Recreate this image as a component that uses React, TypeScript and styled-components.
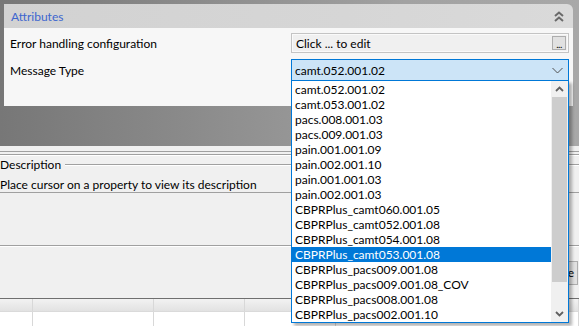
import React, { FC } from "react";
import styled, { createGlobalStyle } from "styled-components";

const options = [
  "camt.052.001.02",
  "camt.053.001.02",
  "pacs.008.001.03",
  "pacs.009.001.03",
  "pain.001.001.09",
  "pain.002.001.10",
  "pain.001.001.03",
  "pain.002.001.03",
  "CBPRPlus_camt060.001.05",
  "CBPRPlus_camt052.001.08",
  "CBPRPlus_camt054.001.08",
  "CBPRPlus_camt053.001.08",
  "CBPRPlus_pacs009.001.08",
  "CBPRPlus_pacs009.001.08_COV",
  "CBPRPlus_pacs008.001.08",
  "CBPRPlus_pacs002.001.10",
];
const selected = "CBPRPlus_camt053.001.08";
const columns = [32, 120, 90, 90];

const DoubleUp = () => (
  <svg width="10" height="11" viewBox="0 0 10 11">
    <path d="M1 5 L5 1.5 L9 5 M1 10 L5 6.5 L9 10" fill="none" stroke="#6a6a6a" strokeWidth="2" />
  </svg>
);

const ChevronDown = () => (
  <svg width="11" height="7" viewBox="0 0 11 7">
    <path d="M0.5 1 L5.5 6 L10.5 1" fill="none" stroke="#505050" strokeWidth="1" />
  </svg>
);

const ScrollArrow: FC<{ down?: boolean }> = ({ down }) => (
  <svg width="9" height="6" viewBox="0 0 9 6">
    <path
      d={down ? "M1 1 L4.5 4.5 L8 1" : "M1 5 L4.5 1.5 L8 5"}
      fill="none"
      stroke="#606060"
      strokeWidth="1.8"
    />
  </svg>
);

const App: FC = () => (
  <Root>
    <Global />
    <Stage>
      <Panel>
        <PanelHeader>
          <Title>Attributes</Title>
          <DoubleUp />
        </PanelHeader>
        <PanelBody>
          <Row>
            <Label>Error handling configuration</Label>
            <TextBox>
              <span>Click ... to edit</span>
              <DotsButton>...</DotsButton>
            </TextBox>
          </Row>
          <Row>
            <Label>Message Type</Label>
            <ComboWrap>
              <Combo>
                <span>camt.052.001.02</span>
                <ChevronDown />
              </Combo>
              <DropList>
                <Items>
                  {options.map((o) => (
                    <Item key={o} $active={o === selected}>
                      {o}
                    </Item>
                  ))}
                </Items>
                <ScrollBar>
                  <ArrowCell>
                    <ScrollArrow />
                  </ArrowCell>
                  <Track>
                    <Thumb />
                  </Track>
                  <ArrowCell>
                    <ScrollArrow down />
                  </ArrowCell>
                </ScrollBar>
              </DropList>
            </ComboWrap>
          </Row>
        </PanelBody>
      </Panel>
    </Stage>
    <Separator />
    <Legend>
      <span>Description</span>
      <LegendLine />
    </Legend>
    <DescText>Place cursor on a property to view its description</DescText>
    <Filler />
    <ButtonBar>
      <Button>Close</Button>
    </ButtonBar>
    <Table>
      <TableRow $header>
        {columns.map((w, i) => (
          <Cell key={i} $w={w} />
        ))}
        <Cell />
      </TableRow>
      <TableRow>
        {columns.map((w, i) => (
          <Cell key={i} $w={w} />
        ))}
        <Cell />
      </TableRow>
    </Table>
  </Root>
);

export default App;

const Global = createGlobalStyle`
  html, body {
    margin: 0;
    padding: 0;
    background: #f0f0f0;
    overflow: hidden;
  }
  body {
    font-family: Lato, "Noto Sans", sans-serif;
    font-size: 12px;
    color: #000;
  }
`;

const Root = styled.div`
  position: relative;
  width: 579px;
  height: 326px;
  display: flex;
  flex-direction: column;
  background: #f0f0f0;
`;

const Stage = styled.div`
  height: 146px;
  box-sizing: border-box;
  padding: 4px 6px 0 4px;
  background: linear-gradient(to right, #777 0%, #8c8c8c 35%, #a2a2a2 70%, #a8a8a8 100%);
`;

const Panel = styled.div`
  border-radius: 0 6px 0 0;
  position: relative;
  z-index: 2;
`;

const PanelHeader = styled.div`
  height: 24px;
  box-sizing: border-box;
  padding: 0 9px 0 7px;
  display: flex;
  align-items: center;
  justify-content: space-between;
  border-radius: 0 6px 0 0;
  background: linear-gradient(to right, #d2d2d2, #d6d6d6 60%, #dadada);
`;

const Title = styled.span`
  color: #3d66cf;
`;

const PanelBody = styled.div`
  height: 78px;
  box-sizing: border-box;
  padding: 5px 4px 0 6px;
  background: #f7f7f7;
  display: flex;
  flex-direction: column;
  gap: 6px;
`;

const Row = styled.div`
  display: grid;
  grid-template-columns: 1fr 278px;
  align-items: center;
`;

const Label = styled.span`
  line-height: 16px;
  padding-top: 1px;
`;

const TextBox = styled.div`
  height: 20px;
  box-sizing: border-box;
  border: 1px solid #c4c4c4;
  box-shadow: inset 0 0 0 1px #fafafa;
  background: #f0f0f0;
  display: flex;
  align-items: center;
  justify-content: space-between;
  padding: 0 2px 0 4px;
`;

const DotsButton = styled.span`
  width: 14px;
  height: 14px;
  box-sizing: border-box;
  border: 1px solid #adadad;
  background: #e1e1e1;
  font-size: 10px;
  line-height: 14px;
  text-align: center;
  letter-spacing: -0.5px;
`;

const ComboWrap = styled.div`
  position: relative;
`;

const Combo = styled.div`
  height: 22px;
  box-sizing: border-box;
  border: 1px solid #0078d7;
  background: #cce4f7;
  display: flex;
  align-items: center;
  justify-content: space-between;
  padding: 0 5px 0 3px;
`;

const DropList = styled.div`
  position: absolute;
  top: 21px;
  left: 0;
  width: 278px;
  height: 243px;
  box-sizing: border-box;
  border: 1px solid #0078d7;
  background: #fff;
  display: flex;
  box-shadow: 3px 3px 3px rgba(0, 0, 0, 0.3);
`;

const Items = styled.div`
  flex: 1;
  padding-top: 1px;
`;

const Item = styled.div<{ $active?: boolean }>`
  height: 15px;
  line-height: 15px;
  padding-left: 3px;
  background: ${(p) => (p.$active ? "#0078d7" : "transparent")};
  color: ${(p) => (p.$active ? "#fff" : "#000")};
  white-space: nowrap;
`;

const ScrollBar = styled.div`
  width: 17px;
  background: #f0f0f0;
  display: flex;
  flex-direction: column;
`;

const ArrowCell = styled.div`
  height: 16px;
  display: flex;
  align-items: center;
  justify-content: center;
`;

const Track = styled.div`
  flex: 1;
  display: flex;
  flex-direction: column;
`;

const Thumb = styled.div`
  height: 185px;
  margin: 0 1px;
  background: #cdcdcd;
`;

const Separator = styled.div`
  margin-top: 5px;
  height: 2px;
  border-top: 1px solid #a0a0a0;
  border-bottom: 1px solid #a0a0a0;
  box-shadow: 0 1px 0 #fff;
`;

const Legend = styled.div`
  margin-top: 3px;
  height: 14px;
  display: flex;
  align-items: center;
  gap: 4px;
  line-height: 14px;
`;

const LegendLine = styled.div`
  flex: 1;
  border-top: 1px solid #a0a0a0;
  border-bottom: 1px solid #fff;
`;

const DescText = styled.div`
  margin-top: 6px;
  height: 14px;
  line-height: 14px;
  border-bottom: 1px solid #a0a0a0;
  white-space: nowrap;
`;

const Filler = styled.div`
  flex: 1;
`;

const ButtonBar = styled.div`
  height: 53px;
  box-sizing: border-box;
  border-top: 1px solid #a0a0a0;
  box-shadow: inset 0 1px 0 #fff;
  display: flex;
  justify-content: flex-end;
  align-items: flex-start;
  padding: 15px 1px 0 0;
`;

const Button = styled.div`
  width: 60px;
  height: 24px;
  box-sizing: border-box;
  border: 1px solid #adadad;
  background: #e1e1e1;
  line-height: 22px;
  text-align: right;
  padding-right: 3px;
`;

const Table = styled.div`
  height: 27px;
  border-top: 1px solid #6f6f6f;
`;

const TableRow = styled.div<{ $header?: boolean }>`
  height: ${(p) => (p.$header ? "12px" : "14px")};
  display: flex;
  background: ${(p) => (p.$header ? "linear-gradient(#f2f2f2, #e2e2e2)" : "#fff")};
  border-bottom: 1px solid #dadada;
`;

const Cell = styled.div<{ $w?: number }>`
  ${(p) => (p.$w ? `width: ${p.$w}px;` : "flex: 1;")}
  border-right: 1px solid #d8d8d8;
`;
